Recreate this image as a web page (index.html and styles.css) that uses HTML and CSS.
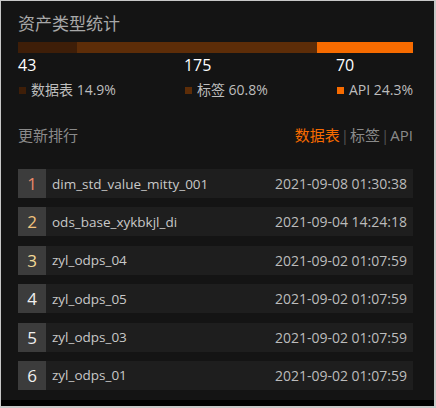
FILE: index.html
```html
<!DOCTYPE html>
<html lang="zh-CN">
<head>
    <meta charset="UTF-8">
    <meta name="viewport" content="width=device-width, initial-scale=1.0">
    <title>资产类型统计</title>
    <link rel="stylesheet" href="styles.css">
</head>
<body>
    <div class="frame">
        <div class="panel">
            <h1 class="title">资产类型统计</h1>

            <div class="bar">
                <div class="seg seg-table" style="width: 14.9%"></div>
                <div class="seg seg-tag" style="width: 60.8%"></div>
                <div class="seg seg-api" style="width: 24.3%"></div>
            </div>

            <div class="stats">
                <div class="stat">
                    <div class="stat-value">43</div>
                    <div class="stat-label"><span class="dot dot-table"></span>数据表 14.9%</div>
                </div>
                <div class="stat">
                    <div class="stat-value">175</div>
                    <div class="stat-label"><span class="dot dot-tag"></span>标签 60.8%</div>
                </div>
                <div class="stat">
                    <div class="stat-value">70</div>
                    <div class="stat-label"><span class="dot dot-api"></span>API 24.3%</div>
                </div>
            </div>

            <div class="rank-head">
                <span class="rank-title">更新排行</span>
                <span class="tabs">
                    <span class="tab active">数据表</span><span class="sep">|</span><span class="tab">标签</span><span class="sep">|</span><span class="tab">API</span>
                </span>
            </div>

            <ul class="rank-list">
                <li class="rank-item">
                    <span class="rank-no no-1">1</span>
                    <span class="rank-name">dim_std_value_mitty_001</span>
                    <span class="rank-time">2021-09-08 01:30:38</span>
                </li>
                <li class="rank-item">
                    <span class="rank-no no-2">2</span>
                    <span class="rank-name">ods_base_xykbkjl_di</span>
                    <span class="rank-time">2021-09-04 14:24:18</span>
                </li>
                <li class="rank-item">
                    <span class="rank-no no-3">3</span>
                    <span class="rank-name">zyl_odps_04</span>
                    <span class="rank-time">2021-09-02 01:07:59</span>
                </li>
                <li class="rank-item">
                    <span class="rank-no">4</span>
                    <span class="rank-name">zyl_odps_05</span>
                    <span class="rank-time">2021-09-02 01:07:59</span>
                </li>
                <li class="rank-item">
                    <span class="rank-no">5</span>
                    <span class="rank-name">zyl_odps_03</span>
                    <span class="rank-time">2021-09-02 01:07:59</span>
                </li>
                <li class="rank-item">
                    <span class="rank-no">6</span>
                    <span class="rank-name">zyl_odps_01</span>
                    <span class="rank-time">2021-09-02 01:07:59</span>
                </li>
            </ul>
        </div>
    </div>
</body>
</html>
```

FILE: styles.css
```css
html, body {
    margin: 0;
    padding: 0;
}
body {
    background-color: #c8c8c8;
    font-family: "Segoe UI", "Open Sans", "Noto Sans CJK SC", sans-serif;
    height: 408px;
    overflow: hidden;
}
.frame {
    margin: 1px 2px 0 1px;
    background-color: #000;
    padding-bottom: 6px;
}
.panel {
    height: 399px;
    box-sizing: border-box;
    padding: 10px 21px 0 17px;
    background-color: #141414;
}
.title {
    margin: 0;
    font-size: 17px;
    line-height: 24px;
    font-weight: normal;
    color: #a8a8a8;
    font-family: "Noto Sans CJK SC", sans-serif;
}

/* stacked bar */
.bar {
    display: flex;
    height: 11px;
    margin-top: 7px;
}
.seg {
    height: 100%;
}
.seg-table { background-color: #3e1e08; }
.seg-tag { background-color: #5d2d08; }
.seg-api { background-color: #f76b00; }

.stats {
    display: flex;
    justify-content: space-between;
    margin-top: 2px;
}
.stat-value {
    font-size: 16px;
    line-height: 20px;
    color: #fff;
}
.stat-label {
    margin-top: 5px;
    font-size: 14px;
    line-height: 20px;
    color: #bdbdbd;
    display: flex;
    align-items: center;
}
.dot {
    display: inline-block;
    width: 7px;
    height: 7px;
    margin-right: 5px;
    margin-left: 1px;
}
.dot-table { background-color: #3e1e08; }
.dot-tag { background-color: #5d2d08; }
.dot-api { background-color: #f76b00; }

/* ranking */
.rank-head {
    display: flex;
    justify-content: space-between;
    align-items: center;
    margin-top: 25px;
    font-size: 15px;
    line-height: 20px;
}
.rank-title {
    color: #8a8a8a;
}
.tab {
    color: #8a8a8a;
}
.tab.active {
    color: #f76b00;
}
.sep {
    color: #555;
    margin: 0 1px;
}
.rank-list {
    list-style: none;
    margin: 24px 0 0;
    padding: 0;
}
.rank-item {
    display: flex;
    align-items: center;
    height: 29px;
    margin-bottom: 9.4px;
    background-color: #1e1e1e;
}
.rank-no {
    width: 28px;
    height: 29px;
    line-height: 29px;
    text-align: center;
    background-color: #3c3c3c;
    font-size: 17px;
    color: #f0f0f0;
}
.no-1 { color: #e8896a; }
.no-2 { color: #f2c27c; }
.no-3 { color: #f3da98; }
.rank-name {
    margin-left: 6px;
    font-size: 13.5px;
    color: #c8c8c8;
}
.rank-time {
    margin-left: auto;
    padding-right: 6px;
    font-size: 14px;
    color: #bcbcbc;
}
```
